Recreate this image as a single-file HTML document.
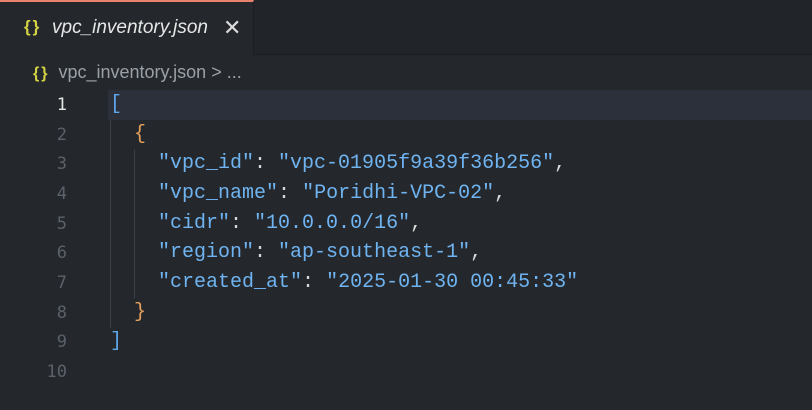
<!DOCTYPE html>
<html><head><meta charset="utf-8"><style>
*{margin:0;padding:0;box-sizing:border-box}
html,body{width:812px;height:410px;overflow:hidden;background:#24282c;font-family:"Liberation Sans",sans-serif}
.tabbar{position:absolute;left:0;top:0;width:812px;height:55px;background:#212529;border-bottom:1px solid #1b1d21}
.tab{position:absolute;left:0;top:0;width:254px;height:55px;background:#24282c;border-top:2px solid #e8826f;border-right:1px solid #1b1d21}
.tab .ic{position:absolute;left:24px;top:15px;color:#d5d243;font-weight:bold;font-size:17px;letter-spacing:2px}
.tab .nm{position:absolute;left:52px;top:15px;color:#e6e6e6;font-style:italic;font-size:19px}
.tab .x{position:absolute;left:223px;top:13px;color:#ddd;font-size:22px}
.bc{position:absolute;left:33px;top:62px;font-size:18px;color:#9aa0a8}
.bc .ic{color:#d5d243;font-weight:bold;font-size:16px;letter-spacing:2px;margin-right:9px}
.hl{position:absolute;left:108px;top:90px;width:704px;height:30px;background:#2c303a}
.ln{position:absolute;left:0;width:67px;text-align:right;font-family:"DejaVu Sans Mono","Liberation Mono",monospace;font-size:17px;color:#5b616a}
.code{position:absolute;left:110px;font-family:"Liberation Mono",monospace;font-size:20px;white-space:pre;color:#d8d8d8}
.s{color:#6fb3f0}.b{color:#5ea6ea}.o{color:#e8a05d}
.g{position:absolute;width:1px;background:#3d4148}
</style></head><body>
<div class="tabbar"><div class="tab"><span class="ic">{}</span><span class="nm">vpc_inventory.json</span><span class="x">✕</span></div></div>
<div class="bc"><span class="ic">{}</span>vpc_inventory.json &gt; ...</div>
<div class="hl"></div>
<div class="g" style="left:110px;top:120px;height:208px"></div>
<div class="g" style="left:134px;top:150px;height:148px"></div>
<div class="ln" style="top:95px;color:#e6e6e6">1</div>
<div class="ln" style="top:125px">2</div>
<div class="ln" style="top:154px">3</div>
<div class="ln" style="top:184px">4</div>
<div class="ln" style="top:214px">5</div>
<div class="ln" style="top:243px">6</div>
<div class="ln" style="top:273px">7</div>
<div class="ln" style="top:303px">8</div>
<div class="ln" style="top:332px">9</div>
<div class="ln" style="top:362px">10</div>
<div class="code" style="top:93px"><span class="b">[</span></div>
<div class="code" style="top:123px">  <span class="o">{</span></div>
<div class="code" style="top:152px">    <span class="s">"vpc_id"</span>: <span class="s">"vpc-01905f9a39f36b256"</span>,</div>
<div class="code" style="top:182px">    <span class="s">"vpc_name"</span>: <span class="s">"Poridhi-VPC-02"</span>,</div>
<div class="code" style="top:212px">    <span class="s">"cidr"</span>: <span class="s">"10.0.0.0/16"</span>,</div>
<div class="code" style="top:241px">    <span class="s">"region"</span>: <span class="s">"ap-southeast-1"</span>,</div>
<div class="code" style="top:271px">    <span class="s">"created_at"</span>: <span class="s">"2025-01-30 00:45:33"</span></div>
<div class="code" style="top:301px">  <span class="o">}</span></div>
<div class="code" style="top:330px"><span class="b">]</span></div>
</body></html>
